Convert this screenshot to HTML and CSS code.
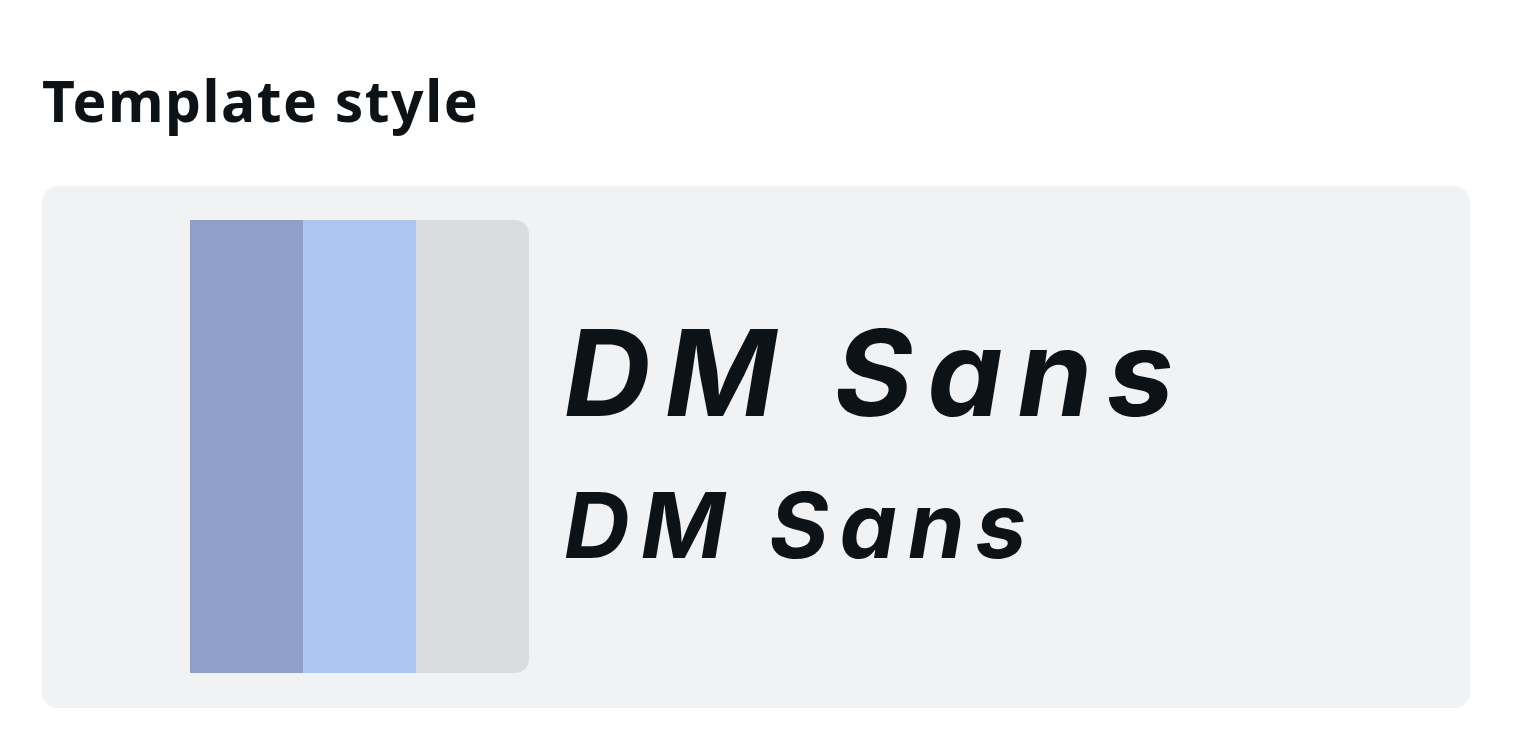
FILE: index.html
```html
<!DOCTYPE html>
<html>
<head>
<meta charset="utf-8">
<link rel="stylesheet" href="styles.css">
</head>
<body>
<main class="page">
  <h1 class="title">Template style</h1>
  <section class="card">
    <div class="swatch">
      <div class="swatch-col c1"></div>
      <div class="swatch-col c2"></div>
      <div class="swatch-col c3"></div>
    </div>
    <div class="fonts">
      <div class="font-heading">DM Sans</div>
      <div class="font-body">DM Sans</div>
    </div>
  </section>
</main>
</body>
</html>
```
FILE: styles.css
```css
* { box-sizing: border-box; }
html, body { margin: 0; padding: 0; background: #ffffff; }
.page {
  padding: 62px 62px 0 42px;
  font-family: "Noto Sans", "Open Sans", sans-serif;
  color: #0d1216;
}
.title {
  margin: 0;
  font-size: 57px;
  font-weight: 700;
  line-height: 76px;
  letter-spacing: 1.5px;
}
.card {
  margin-top: 48px;
  width: 1428px;
  height: 522px;
  background: #f1f2f4;
  border-radius: 16px;
  display: flex;
  align-items: center;
  padding: 34px 0 35px 148px;
}
.swatch {
  display: flex;
  width: 339px;
  height: 453px;
  border-radius: 0 14px 14px 0;
  overflow: hidden;
  flex-shrink: 0;
}
.swatch-col { flex: 1; }
.c1 { background: #909fca; }
.c2 { background: #abc6f0; }
.c3 { background: #d9dde0; }
.fonts {
  margin-left: 38px;
  padding-bottom: 16px;
  display: flex;
  flex-direction: column;
  font-family: "Inter", "Roboto", sans-serif;
  font-style: italic;
  font-weight: 700;
  color: #0d1216;
}
.font-heading {
  margin-left: -3px;
  font-size: 120px;
  line-height: 140px;
  letter-spacing: 14.5px;
}
.font-body {
  margin-left: -3px;
  margin-top: 32px;
  font-size: 91px;
  line-height: 100px;
  letter-spacing: 11px;
}
```
